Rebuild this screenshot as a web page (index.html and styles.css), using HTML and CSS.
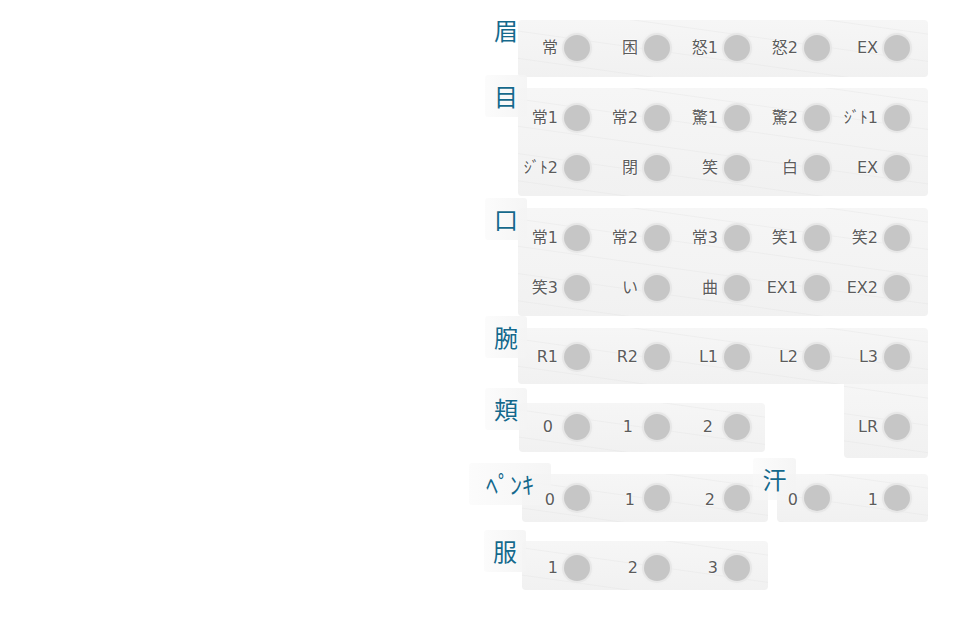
FILE: index.html
```html
<!DOCTYPE html>
<html lang="ja">
<head>
<meta charset="utf-8">
<title>Face parts</title>
<link rel="stylesheet" href="styles.css">
</head>
<body>
<div class="board">
  <section class="group g-mayu">
    <div class="tag t-mayu">眉</div>
    <div class="panel p5">
      <div class="cell"><span class="lbl">常</span><span class="dot"></span></div>
      <div class="cell"><span class="lbl">困</span><span class="dot"></span></div>
      <div class="cell"><span class="lbl">怒1</span><span class="dot"></span></div>
      <div class="cell"><span class="lbl">怒2</span><span class="dot"></span></div>
      <div class="cell"><span class="lbl">EX</span><span class="dot"></span></div>
    </div>
  </section>

  <section class="group g-me">
    <div class="tag t-me">目</div>
    <div class="panel p5 p-two">
      <div class="cell"><span class="lbl">常1</span><span class="dot"></span></div>
      <div class="cell"><span class="lbl">常2</span><span class="dot"></span></div>
      <div class="cell"><span class="lbl">驚1</span><span class="dot"></span></div>
      <div class="cell"><span class="lbl">驚2</span><span class="dot"></span></div>
      <div class="cell"><span class="lbl">ｼﾞﾄ1</span><span class="dot"></span></div>
      <div class="cell"><span class="lbl">ｼﾞﾄ2</span><span class="dot"></span></div>
      <div class="cell"><span class="lbl">閉</span><span class="dot"></span></div>
      <div class="cell"><span class="lbl">笑</span><span class="dot"></span></div>
      <div class="cell"><span class="lbl">白</span><span class="dot"></span></div>
      <div class="cell"><span class="lbl">EX</span><span class="dot"></span></div>
    </div>
  </section>

  <section class="group g-kuchi">
    <div class="tag t-kuchi">口</div>
    <div class="panel p5 p-two">
      <div class="cell"><span class="lbl">常1</span><span class="dot"></span></div>
      <div class="cell"><span class="lbl">常2</span><span class="dot"></span></div>
      <div class="cell"><span class="lbl">常3</span><span class="dot"></span></div>
      <div class="cell"><span class="lbl">笑1</span><span class="dot"></span></div>
      <div class="cell"><span class="lbl">笑2</span><span class="dot"></span></div>
      <div class="cell"><span class="lbl">笑3</span><span class="dot"></span></div>
      <div class="cell"><span class="lbl">い</span><span class="dot"></span></div>
      <div class="cell"><span class="lbl">曲</span><span class="dot"></span></div>
      <div class="cell"><span class="lbl">EX1</span><span class="dot"></span></div>
      <div class="cell"><span class="lbl">EX2</span><span class="dot"></span></div>
    </div>
  </section>

  <section class="group g-ude">
    <div class="tag t-ude">腕</div>
    <div class="panel p5 p-ude">
      <div class="cell"><span class="lbl">R1</span><span class="dot"></span></div>
      <div class="cell"><span class="lbl">R2</span><span class="dot"></span></div>
      <div class="cell"><span class="lbl">L1</span><span class="dot"></span></div>
      <div class="cell"><span class="lbl">L2</span><span class="dot"></span></div>
      <div class="cell"><span class="lbl">L3</span><span class="dot"></span></div>
    </div>
    <div class="ude-lower">
      <div class="group g-hoho">
        <div class="tag t-hoho">頬</div>
        <div class="panel p-hoho">
          <div class="cell"><span class="lbl num">0</span><span class="dot"></span></div>
          <div class="cell"><span class="lbl num">1</span><span class="dot"></span></div>
          <div class="cell"><span class="lbl num">2</span><span class="dot"></span></div>
        </div>
      </div>
      <div class="panel p-lr">
        <div class="cell"><span class="lbl">LR</span><span class="dot"></span></div>
      </div>
    </div>
  </section>

  <div class="pair">
    <section class="group g-penki">
      <div class="tag t-penki">ﾍﾟﾝｷ</div>
      <div class="panel p3 p-penki">
        <div class="cell"><span class="lbl low wide">0</span><span class="dot"></span></div>
        <div class="cell"><span class="lbl low wide">1</span><span class="dot"></span></div>
        <div class="cell"><span class="lbl low wide">2</span><span class="dot"></span></div>
      </div>
    </section>
    <section class="group g-ase">
      <div class="tag t-ase">汗</div>
      <div class="panel p-ase">
        <div class="cell first"><span class="lbl low">0</span><span class="dot"></span></div>
        <div class="cell"><span class="lbl low">1</span><span class="dot"></span></div>
      </div>
    </section>
  </div>

  <section class="group g-fuku">
    <div class="tag t-fuku">服</div>
    <div class="panel p3 p-fuku">
      <div class="cell"><span class="lbl">1</span><span class="dot"></span></div>
      <div class="cell"><span class="lbl">2</span><span class="dot"></span></div>
      <div class="cell"><span class="lbl">3</span><span class="dot"></span></div>
    </div>
  </section>
</div>
</body>
</html>
```

FILE: styles.css
```css
html, body {
  margin: 0;
  padding: 0;
  background: #ffffff;
}

body {
  font-family: "DejaVu Sans", "Noto Sans CJK JP", sans-serif;
  font-size: 16px;
  color: #5c5c5c;
}

.board {
  padding: 20px 0 0 518px;
}

.group {
  position: relative;
}

.panel {
  display: grid;
  column-gap: 10px;
  row-gap: 20px;
  width: max-content;
  border-radius: 4px;
  background-color: #f3f3f3;
  background-image:
    repeating-linear-gradient(188deg,
      rgba(255,255,255,0) 0px,
      rgba(255,255,255,0) 13px,
      rgba(225,225,225,0.35) 14px,
      rgba(255,255,255,0) 15px,
      rgba(255,255,255,0) 27px),
    linear-gradient(180deg, #f6f6f6, #f1f1f1);
}

.p5 {
  grid-template-columns: repeat(5, 70px);
  padding: 13px 16px 14px 4px;
}

.p5.p-two {
  padding: 15px 16px 13px 4px;
}

.p3 {
  grid-template-columns: repeat(3, 70px);
}

.cell {
  position: relative;
  z-index: 2;
  display: flex;
  align-items: center;
  justify-content: flex-end;
  height: 30px;
  width: 70px;
}

.lbl {
  margin-right: 4px;
  white-space: nowrap;
  line-height: 20px;
  text-shadow: 0 0 2px #fff, 0 0 2px #fff, 0 0 1px #fff;
}

.lbl.num {
  margin-right: 9px;
}

.lbl.wide {
  margin-right: 7px;
}

.lbl.low {
  position: relative;
  top: 2px;
}

.dot {
  flex: none;
  width: 26px;
  height: 26px;
  margin: 2px;
  border-radius: 50%;
  background: #c6c6c6;
  box-shadow: 0 0 0 2px #e7e7e7, 0 0 3px 2px #ededed;
}

.tag {
  position: absolute;
  z-index: 1;
  width: 42px;
  height: 42px;
  display: flex;
  align-items: center;
  justify-content: center;
  border-radius: 3px;
  background: linear-gradient(90deg, rgba(248,248,248,0.5), rgba(244,244,244,0.9));
  font-family: "Noto Sans CJK JP", sans-serif;
  font-size: 24px;
  line-height: 1;
  color: #15698c;
  text-shadow: 0 0 2px #fff, 0 0 1px #fff;
}

.t-mayu { left: -33px; top: -11px; background: transparent; }
.t-me { left: -33px; top: -13px; }
.t-kuchi { left: -33px; top: -10px; }
.t-ude { left: -33px; top: -12px; }
.t-hoho { left: -34px; top: -15px; }
.t-penki { left: -53px; top: -11px; width: 82px; }
.t-ase { left: -24px; top: -16px; width: 43px; }
.t-fuku { left: -38px; top: -11px; }

.g-me { margin-top: 11px; }
.g-kuchi { margin-top: 12px; }
.g-ude { margin-top: 12px; }

.p-ude {
  padding: 14px 16px 12px 4px;
  border-bottom-right-radius: 0;
}

.ude-lower {
  display: flex;
  justify-content: space-between;
  align-items: flex-start;
  width: 410px;
}

.g-hoho {
  margin-top: 19px;
  margin-left: 1px;
}

.p-hoho {
  grid-template-columns: repeat(3, 70px);
  padding: 9px 13px 10px 3px;
}

.p-lr {
  grid-template-columns: 68px;
  padding: 28px 16px 16px 0;
  border-top-left-radius: 0;
  border-top-right-radius: 0;
}

.p-lr .cell {
  margin-left: -2px;
}

.pair {
  display: flex;
  align-items: flex-start;
  margin-top: 16px;
}

.g-penki {
  margin-left: 4px;
}

.p-penki {
  padding: 9px 16px 9px 0;
}

.g-ase {
  margin-left: 9px;
}

.p-ase {
  grid-template-columns: 55px 70px;
  padding: 9px 16px 9px 0;
}

.p-ase .cell.first {
  margin-left: -15px;
}

.g-fuku {
  margin-top: 19px;
  margin-left: 4px;
}

.p-fuku {
  padding: 12px 16px 7px 0;
}
```
